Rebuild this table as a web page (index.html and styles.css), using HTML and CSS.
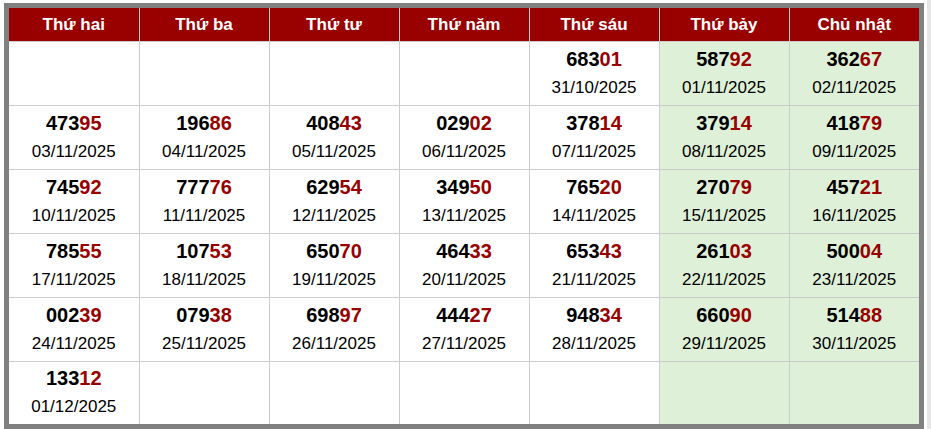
FILE: index.html
```html
<!DOCTYPE html>
<html lang="vi">
<head>
<meta charset="utf-8">
<title>Lịch kết quả</title>
<link rel="stylesheet" href="styles.css">
</head>
<body>
<div class="frame">
<table class="cal">
<thead>
<tr>
<th>Thứ hai</th><th>Thứ ba</th><th>Thứ tư</th><th>Thứ năm</th><th>Thứ sáu</th><th>Thứ bảy</th><th>Chủ nhật</th>
</tr>
</thead>
<tbody>
<tr>
<td></td><td></td><td></td><td></td>
<td><div class="num">683<span class="hi">01</span></div><div class="date">31/10/2025</div></td>
<td class="we"><div class="num">587<span class="hi">92</span></div><div class="date">01/11/2025</div></td>
<td class="we"><div class="num">362<span class="hi">67</span></div><div class="date">02/11/2025</div></td>
</tr>
<tr>
<td><div class="num">473<span class="hi">95</span></div><div class="date">03/11/2025</div></td>
<td><div class="num">196<span class="hi">86</span></div><div class="date">04/11/2025</div></td>
<td><div class="num">408<span class="hi">43</span></div><div class="date">05/11/2025</div></td>
<td><div class="num">029<span class="hi">02</span></div><div class="date">06/11/2025</div></td>
<td><div class="num">378<span class="hi">14</span></div><div class="date">07/11/2025</div></td>
<td class="we"><div class="num">379<span class="hi">14</span></div><div class="date">08/11/2025</div></td>
<td class="we"><div class="num">418<span class="hi">79</span></div><div class="date">09/11/2025</div></td>
</tr>
<tr>
<td><div class="num">745<span class="hi">92</span></div><div class="date">10/11/2025</div></td>
<td><div class="num">777<span class="hi">76</span></div><div class="date">11/11/2025</div></td>
<td><div class="num">629<span class="hi">54</span></div><div class="date">12/11/2025</div></td>
<td><div class="num">349<span class="hi">50</span></div><div class="date">13/11/2025</div></td>
<td><div class="num">765<span class="hi">20</span></div><div class="date">14/11/2025</div></td>
<td class="we"><div class="num">270<span class="hi">79</span></div><div class="date">15/11/2025</div></td>
<td class="we"><div class="num">457<span class="hi">21</span></div><div class="date">16/11/2025</div></td>
</tr>
<tr>
<td><div class="num">785<span class="hi">55</span></div><div class="date">17/11/2025</div></td>
<td><div class="num">107<span class="hi">53</span></div><div class="date">18/11/2025</div></td>
<td><div class="num">650<span class="hi">70</span></div><div class="date">19/11/2025</div></td>
<td><div class="num">464<span class="hi">33</span></div><div class="date">20/11/2025</div></td>
<td><div class="num">653<span class="hi">43</span></div><div class="date">21/11/2025</div></td>
<td class="we"><div class="num">261<span class="hi">03</span></div><div class="date">22/11/2025</div></td>
<td class="we"><div class="num">500<span class="hi">04</span></div><div class="date">23/11/2025</div></td>
</tr>
<tr>
<td><div class="num">002<span class="hi">39</span></div><div class="date">24/11/2025</div></td>
<td><div class="num">079<span class="hi">38</span></div><div class="date">25/11/2025</div></td>
<td><div class="num">698<span class="hi">97</span></div><div class="date">26/11/2025</div></td>
<td><div class="num">444<span class="hi">27</span></div><div class="date">27/11/2025</div></td>
<td><div class="num">948<span class="hi">34</span></div><div class="date">28/11/2025</div></td>
<td class="we"><div class="num">660<span class="hi">90</span></div><div class="date">29/11/2025</div></td>
<td class="we"><div class="num">514<span class="hi">88</span></div><div class="date">30/11/2025</div></td>
</tr>
<tr class="last">
<td><div class="num">133<span class="hi">12</span></div><div class="date">01/12/2025</div></td>
<td></td><td></td><td></td><td></td>
<td class="we"></td><td class="we"></td>
</tr>
</tbody>
</table>
</div>
</body>
</html>
```
FILE: styles.css
```css
html, body {
  margin: 0;
  padding: 0;
  background: #ffffff;
}
body {
  font-family: "Liberation Sans", Arial, sans-serif;
  color: #000;
  border-right: 4px solid #e6e6e6;
  width: 927px;
}
.frame {
  box-sizing: border-box;
  width: 920px;
  margin: 3px 0 0 4px;
  border: 5px solid #808080;
  background: #fff;
}
.cal {
  width: 100%;
  border-collapse: collapse;
  border-style: hidden;
  table-layout: fixed;
}
.cal th, .cal td {
  border: 1px solid #cccccc;
  text-align: center;
  vertical-align: middle;
  padding: 0;
}
.cal th {
  height: 33px;
  background: #990000;
  color: #fff;
  font-weight: bold;
  font-size: 17px;
}
.cal tbody tr {
  height: 64px;
}
.cal tbody tr.last {
  height: 62px;
}
.cal td.we {
  background: #dff0d8;
}
.num {
  font-weight: bold;
  font-size: 20px;
  line-height: 26px;
}
.hi {
  color: #990000;
}
.date {
  font-size: 17px;
  line-height: 26px;
  margin-top: 3px;
}
```
